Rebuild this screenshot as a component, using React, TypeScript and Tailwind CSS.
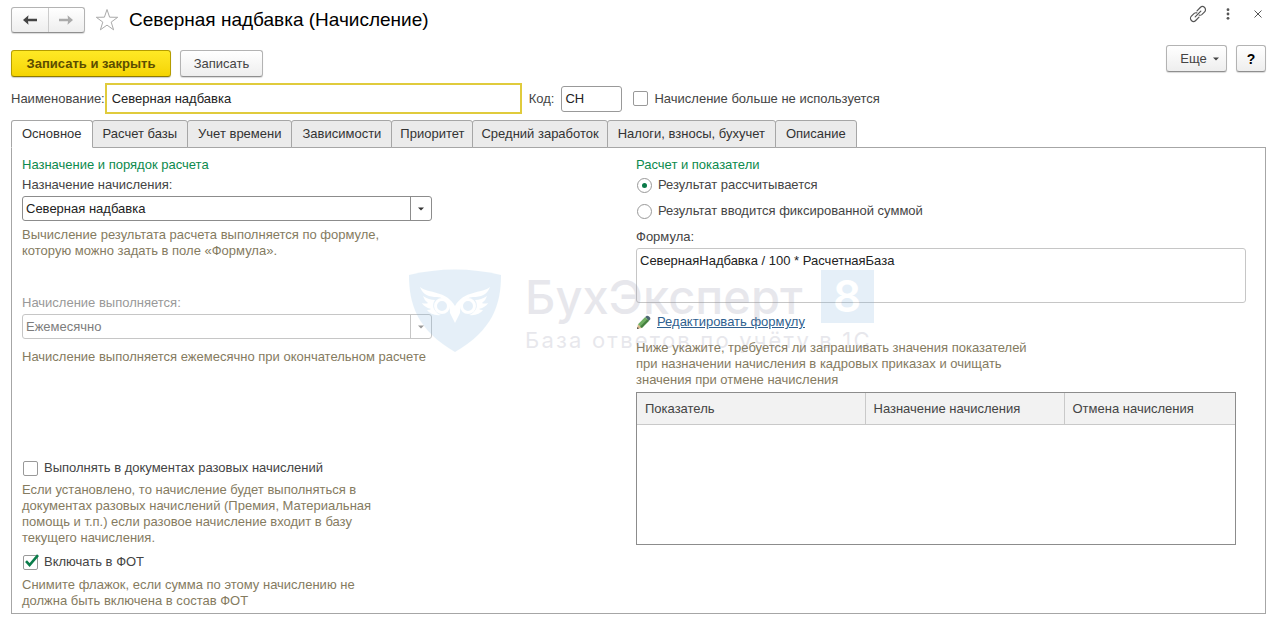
import { useState } from "react";
import type { ReactNode } from "react";

const TABS = [
  { title: "Основное", padding: "px-2.5" },
  { title: "Расчет базы", padding: "px-2.5" },
  { title: "Учет времени", padding: "px-2.5" },
  { title: "Зависимости", padding: "px-2.5" },
  { title: "Приоритет", padding: "px-2" },
  { title: "Средний заработок", padding: "px-2" },
  { title: "Налоги, взносы, бухучет", padding: "px-2.5" },
  { title: "Описание", padding: "px-2.5" },
];

const BUTTON =
  "rounded-[3px] border border-[#b3b3b3] border-b-[#8f8f8f] bg-gradient-to-b from-white to-[#eeeeee] shadow-[0_1px_1px_rgba(0,0,0,0.15)]";

function ArrowIcon({ className }: { className: string }) {
  return (
    <svg viewBox="0 0 14 10" className={className} fill="currentColor">
      <path d="M0 5 5.5 0.3 5 3.8H14V6.2H5L5.5 9.7Z" />
    </svg>
  );
}

function Caret({ className }: { className: string }) {
  return (
    <svg viewBox="0 0 6 4" className={className} fill="currentColor">
      <path d="M0 0.5H6L3 3.5Z" />
    </svg>
  );
}

function Hint({ className = "", children }: { className?: string; children: ReactNode }) {
  return <p className={`leading-4 text-[#857b5f] ${className}`}>{children}</p>;
}

function Checkbox({ label, defaultChecked = false }: { label: string; defaultChecked?: boolean }) {
  return (
    <label className="flex h-4 items-center gap-1.5 pl-px whitespace-nowrap">
      <span className="relative block h-[15px] w-[15px]">
        <input
          type="checkbox"
          defaultChecked={defaultChecked}
          className="peer block h-[15px] w-[15px] appearance-none rounded-[2px] border border-[#999999] bg-white"
        />
        <svg
          viewBox="0 0 16 16"
          className="pointer-events-none absolute -top-px left-0 hidden h-4 w-4 text-[#0b7d4b] peer-checked:block"
          fill="none"
          stroke="currentColor"
          strokeWidth="2.6"
        >
          <path d="M3 7.2 6.6 11 15 1.2" />
        </svg>
      </span>
      {label}
    </label>
  );
}

function Radio({ label, defaultChecked = false }: { label: string; defaultChecked?: boolean }) {
  return (
    <label className="flex h-4 items-center gap-1.5 pl-px">
      <span className="relative block h-[15px] w-[15px]">
        <input
          type="radio"
          name="calc-mode"
          defaultChecked={defaultChecked}
          className="peer block h-[15px] w-[15px] appearance-none rounded-full border border-[#999999] bg-white"
        />
        <span className="pointer-events-none absolute top-[5px] left-[5px] hidden h-[5px] w-[5px] rounded-full bg-[#0a7a48] peer-checked:block" />
      </span>
      {label}
    </label>
  );
}

function Select({ id, value, disabled = false }: { id: string; value: string; disabled?: boolean }) {
  return (
    <div className="relative mt-[3px] w-[410px]">
      <select
        id={id}
        disabled={disabled}
        className="block h-[25px] w-full appearance-none rounded-[3px] border border-[#8c8c8c] bg-white px-[3px] text-[#222222] disabled:border-[#c6c6c6] disabled:text-[#7d7d7d] disabled:opacity-100"
      >
        <option>{value}</option>
      </select>
      <span
        className={`pointer-events-none absolute inset-y-0 right-0 flex w-[22px] items-center justify-center border-l pr-0.5 ${
          disabled ? "border-[#c6c6c6] text-[#999999]" : "border-[#8c8c8c] text-[#333333]"
        }`}
      >
        <Caret className="h-1 w-1.5" />
      </span>
    </div>
  );
}

function PencilIcon() {
  return (
    <svg viewBox="0 0 15 15" className="h-[15px] w-[15px]">
      <path d="M1 14 2 9.2 5.8 13Z" fill="#d9b98a" />
      <path d="M1 14 1.5 12.1 2.9 13.5Z" fill="#333333" />
      <path d="M2 9.2 9.2 2 13 5.8 5.8 13Z" fill="#6fae62" />
      <path d="M4.2 11.4 11.4 4.2 13 5.8 5.8 13Z" fill="#46803f" />
      <path d="M9.2 2 10.8 0.7Q12 0.4 13.4 1.8T14.3 4.3L13 5.8Z" fill="#4d6673" />
    </svg>
  );
}

function OwlShield() {
  return (
    <svg viewBox="0 0 92 84" className="h-[84px] w-[92px]">
      <path d="M0 7Q46-4 92 7C92 36 84 62 46 84 8 62 0 36 0 7Z" fill="#7fb5df" />
      <g fill="none" stroke="#ffffff">
        <circle cx="33" cy="38" r="6.5" strokeWidth="3" />
        <circle cx="59" cy="38" r="6.5" strokeWidth="3" />
      </g>
      <g fill="#ffffff">
        <path d="M11 19C20 26 37 22 46 38 55 22 72 26 81 19 78 27 72 29 64 29 55 30 51 36 51 45L46 55 41 45C41 36 37 30 28 29 20 29 14 27 11 19Z" />
        <path d="M14 28Q20 32 26 32 23 36 25 41 28 46 32 47 22 48 18 42 21 42 22 41 15 39 13 35 17 36 19 35 15 32 14 28Z" />
        <path d="M78 28Q72 32 66 32 69 36 67 41 64 46 60 47 70 48 74 42 71 42 70 41 77 39 79 35 75 36 73 35 77 32 78 28Z" />
      </g>
    </svg>
  );
}

function Watermark() {
  return (
    <div className="pointer-events-none absolute top-[268px] left-[409px] flex gap-6 font-['Inter','Noto_Sans',sans-serif] whitespace-nowrap opacity-20 select-none">
      <OwlShield />
      <div>
        <div className="flex h-14 items-center gap-[18px] text-[#8d8da3]">
          <span className="text-[47px] leading-none font-medium">БухЭксперт</span>
          <span className="flex h-[53px] w-[53px] items-center justify-center bg-[#7fb5df] text-[44px] leading-none font-semibold text-white">
            8
          </span>
        </div>
        <div className="mt-1 text-[22px] leading-6 tracking-widest text-[#8d8da3]">База ответов по учёту в 1С</div>
      </div>
    </div>
  );
}

function WindowHeader() {
  return (
    <header className="flex items-start justify-between">
      <div className="flex items-center">
        <div className={`flex h-[26px] w-[74px] ${BUTTON}`}>
          <button aria-label="Назад" className="flex flex-1 items-center justify-center border-r border-[#cccccc] text-[#444444]">
            <ArrowIcon className="h-2.5 w-3.5" />
          </button>
          <button aria-label="Вперед" className="flex flex-1 items-center justify-center text-[#aaaaaa]">
            <ArrowIcon className="h-2.5 w-3.5 rotate-180" />
          </button>
        </div>
        <button aria-label="В избранное" className="ml-2.5 text-[#aaaaaa]">
          <svg viewBox="0 0 24 24" className="block h-6 w-6" fill="none" stroke="currentColor">
            <path d="M12 1.5 14.6 9.2 22.7 9.3 16.2 14.1 18.6 21.8 12 17.1 5.4 21.8 7.8 14.1 1.3 9.3 9.4 9.2Z" />
          </svg>
        </button>
        <h1 className="ml-2.5 text-[19px] leading-6 text-black">Северная надбавка (Начисление)</h1>
      </div>
      <div className="-mt-0.5 -mr-px flex items-center gap-3 text-[#555555]">
        <button aria-label="Получить ссылку">
          <svg viewBox="0 0 18 18" className="block h-[18px] w-[18px]" fill="none" stroke="currentColor" strokeWidth="1.2" strokeLinecap="round">
            <path d="M6.2 11.8 11.8 6.2M8 5.8 11.3 2.5A3 3 0 0 1 15.6 6.8L12.8 9.6Q11.6 10.6 10.2 10.1M10 12.2 6.7 15.5A3 3 0 0 1 2.4 11.2L5.2 8.4Q6.4 7.4 7.8 7.9" />
          </svg>
        </button>
        <button aria-label="Меню" className="flex w-[18px] justify-center">
          <svg viewBox="0 0 4 12" className="h-3 w-1" fill="currentColor">
            <circle cx="2" cy="1.7" r="1.4" />
            <circle cx="2" cy="6" r="1.4" />
            <circle cx="2" cy="10.3" r="1.4" />
          </svg>
        </button>
        <button aria-label="Закрыть" className="flex w-[18px] justify-center">
          <svg viewBox="0 0 8 8" className="h-2 w-2" fill="none" stroke="currentColor">
            <path d="M0.5 0.5 7.5 7.5M7.5 0.5 0.5 7.5" />
          </svg>
        </button>
      </div>
    </header>
  );
}

function Toolbar() {
  return (
    <div className="mt-3 flex items-start">
      <button className="mt-[5px] h-[27px] w-40 rounded-[3px] border border-[#b59d00] border-b-[#8e7b00] bg-gradient-to-b from-[#ffe924] to-[#f5d400] font-bold text-[#5c4d00] shadow-[0_1px_1px_rgba(0,0,0,0.2)]">
        Записать и закрыть
      </button>
      <button className={`mt-[5px] ml-[9px] h-[27px] w-[83px] ${BUTTON}`}>Записать</button>
      <button className={`ml-auto flex h-[27px] w-[61px] items-center justify-center gap-1.5 pl-1.5 ${BUTTON}`}>
        Еще
        <Caret className="h-1 w-1.5" />
      </button>
      <button className={`ml-[9px] h-[27px] w-[30px] text-sm font-bold text-black ${BUTTON}`}>?</button>
    </div>
  );
}

function PurposeColumn() {
  return (
    <section>
      <h2 className="leading-4 text-[#0c8a4d]">Назначение и порядок расчета</h2>
      <label htmlFor="purpose" className="mt-1 block leading-4">
        Назначение начисления:
      </label>
      <Select id="purpose" value="Северная надбавка" />
      <Hint className="mt-1.5">
        Вычисление результата расчета выполняется по формуле,
        <br />
        которую можно задать в поле «Формула».
      </Hint>

      <label htmlFor="period" className="mt-9 block leading-4 text-[#999999]">
        Начисление выполняется:
      </label>
      <Select id="period" value="Ежемесячно" disabled />
      <Hint className="mt-2.5">Начисление выполняется ежемесячно при окончательном расчете</Hint>

      <div className="mt-[95px]">
        <Checkbox label="Выполнять в документах разовых начислений" />
      </div>
      <Hint className="mt-1.5">
        Если установлено, то начисление будет выполняться в
        <br />
        документах разовых начислений (Премия, Материальная
        <br />
        помощь и т.п.) если разовое начисление входит в базу
        <br />
        текущего начисления.
      </Hint>
      <div className="mt-2">
        <Checkbox label="Включать в ФОТ" defaultChecked />
      </div>
      <Hint className="mt-[7px]">
        Снимите флажок, если сумма по этому начислению не
        <br />
        должна быть включена в состав ФОТ
      </Hint>
    </section>
  );
}

function CalculationColumn() {
  return (
    <section>
      <h2 className="leading-4 text-[#0c8a4d]">Расчет и показатели</h2>
      <div className="mt-1 flex flex-col gap-2.5">
        <Radio label="Результат рассчитывается" defaultChecked />
        <Radio label="Результат вводится фиксированной суммой" />
      </div>
      <label htmlFor="formula" className="mt-2.5 block leading-4">
        Формула:
      </label>
      <textarea
        id="formula"
        readOnly
        value="СевернаяНадбавка / 100 * РасчетнаяБаза"
        className="mt-[3px] block h-[55px] w-full resize-none rounded-[3px] border border-[#c6c6c6] bg-white px-[3px] py-1 leading-4 text-[#222222]"
      />
      <div className="mt-[11px] flex h-4 items-center gap-1.5">
        <PencilIcon />
        <a href="#formula" className="text-[#2f5f8f] underline">
          Редактировать формулу
        </a>
      </div>
      <Hint className="mt-2.5">
        Ниже укажите, требуется ли запрашивать значения показателей
        <br />
        при назначении начисления в кадровых приказах и очищать
        <br />
        значения при отмене начисления
      </Hint>
      <div className="mt-1 mr-2.5 h-[153px] border border-[#8c8c8c]">
        <table className="w-full table-fixed border-collapse text-left">
          <thead>
            <tr className="h-[31px] border-b border-[#c9c9c9] bg-[#f2f2f2]">
              <th className="w-[228px] border-r border-[#c9c9c9] px-2 font-normal">Показатель</th>
              <th className="w-[199px] border-r border-[#c9c9c9] px-2 font-normal">Назначение начисления</th>
              <th className="px-2 font-normal">Отмена начисления</th>
            </tr>
          </thead>
          <tbody />
        </table>
      </div>
    </section>
  );
}

export default function App() {
  const [activeTab, setActiveTab] = useState(0);

  return (
    <main className="relative bg-white pt-[7px] pr-4 pb-2 pl-[11px] font-['Liberation_Sans',Arial,sans-serif] text-[13px] text-[#444444]">
      <WindowHeader />
      <Toolbar />

      <div className="mt-1.5 flex items-center">
        <label htmlFor="name">Наименование:</label>
        <input
          id="name"
          defaultValue="Северная надбавка"
          className="h-[31px] w-[417px] border-2 border-[#e0cb3c] bg-white px-[5px] text-[#222222] outline-none"
        />
        <label htmlFor="code" className="ml-[7px]">
          Код:
        </label>
        <input
          id="code"
          defaultValue="СН"
          className="mr-2.5 ml-[7px] h-[26px] w-[61px] rounded-[3px] border border-[#999999] bg-white px-[3px] text-[#222222]"
        />
        <Checkbox label="Начисление больше не используется" />
      </div>

      <div role="tablist" className="mt-1.5 flex">
        {TABS.map(({ title, padding }, i) => (
          <button
            key={title}
            role="tab"
            aria-selected={i === activeTab}
            onClick={() => setActiveTab(i)}
            className={`h-7 rounded-t-[3px] border border-[#a6a6a6] whitespace-nowrap text-[#333333] not-first:-ml-px ${padding} ${
              i === activeTab ? "relative z-10 border-b-white bg-white" : "bg-[#ebebeb]"
            }`}
          >
            {title}
          </button>
        ))}
      </div>

      <div className="-mt-px grid grid-cols-2 gap-1 border border-[#a6a6a6] pt-[9px] pr-[19px] pb-1 pl-2.5">
        <PurposeColumn />
        <CalculationColumn />
      </div>

      <Watermark />
    </main>
  );
}
